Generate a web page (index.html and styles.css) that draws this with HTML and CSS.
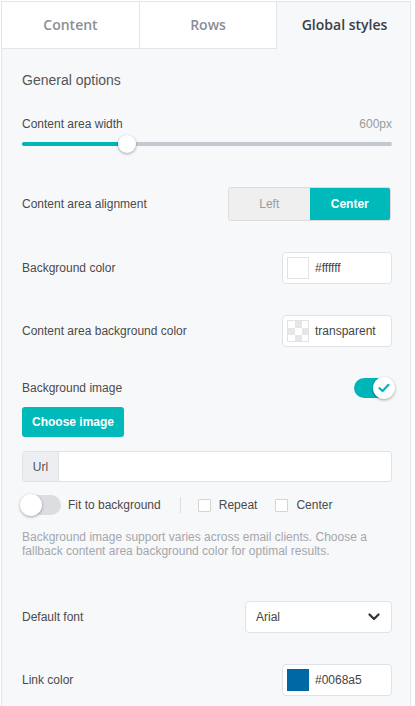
FILE: index.html
```html
<!DOCTYPE html>
<html>
<head>
<meta charset="utf-8">
<link rel="stylesheet" href="styles.css">
</head>
<body>
<div class="panel">
  <div class="tabs">
    <div class="tab tab-content">Content</div>
    <div class="tab tab-rows">Rows</div>
    <div class="tab tab-global active">Global styles</div>
  </div>
  <div class="body">
    <div class="section-title">General options</div>

    <div class="row-label">
      <span>Content area width</span>
      <span class="muted">600px</span>
    </div>
    <div class="slider">
      <div class="track"><div class="fill"></div></div>
      <div class="knob"></div>
    </div>

    <div class="row r-align">
      <span>Content area alignment</span>
      <div class="segmented">
        <div class="seg seg-off">Left</div>
        <div class="seg seg-on">Center</div>
      </div>
    </div>

    <div class="row r-bg">
      <span>Background color</span>
      <div class="color-input">
        <span class="swatch swatch-white"></span>
        <span>#ffffff</span>
      </div>
    </div>

    <div class="row r-cbg">
      <span>Content area background color</span>
      <div class="color-input">
        <span class="swatch swatch-checker"></span>
        <span>transparent</span>
      </div>
    </div>

    <div class="row r-bgimg">
      <span>Background image</span>
      <div class="toggle on">
        <div class="thumb">
          <svg width="12" height="10" viewBox="0 0 12 10"><polyline points="1.5,5.2 4.6,8 10.5,1.8" fill="none" stroke="#00b5b8" stroke-width="2.2" stroke-linecap="round" stroke-linejoin="round"/></svg>
        </div>
      </div>
    </div>

    <div class="btn">Choose image</div>

    <div class="url">
      <div class="url-prefix">Url</div>
      <div class="url-field"></div>
    </div>

    <div class="opts">
      <div class="toggle off"><div class="thumb"></div></div>
      <span class="opt-label">Fit to background</span>
      <span class="divider"></span>
      <span class="checkbox"></span>
      <span class="opt-label">Repeat</span>
      <span class="checkbox cb2"></span>
      <span class="opt-label">Center</span>
    </div>

    <p class="help">Background image support varies across email clients. Choose a fallback content area background color for optimal results.</p>

    <div class="row r-font">
      <span>Default font</span>
      <div class="select">
        <span>Arial</span>
        <svg width="12" height="8" viewBox="0 0 12 8"><polyline points="1.5,1.5 6,6 10.5,1.5" fill="none" stroke="#333" stroke-width="2.2" stroke-linecap="round" stroke-linejoin="round"/></svg>
      </div>
    </div>

    <div class="row r-link">
      <span>Link color</span>
      <div class="color-input">
        <span class="swatch swatch-blue"></span>
        <span>#0068a5</span>
      </div>
    </div>
  </div>
</div>
</body>
</html>
```

FILE: styles.css
```css
* { box-sizing: border-box; }
html, body { margin: 0; padding: 0; background: #ffffff; }
body {
  font-family: "Liberation Sans", Arial, sans-serif;
  font-size: 12px;
  color: #4b4b4b;
  width: 415px;
  height: 706px;
  overflow: hidden;
}
.panel {
  margin: 1px 0 0 1px;
  width: 410px;
  height: 720px;
  border: 1px solid #e2e5e9;
  border-bottom: none;
  background: #f7f8fa;
}
.tabs { display: flex; height: 47px; }
.tab {
  font-family: "Open Sans", sans-serif;
  font-weight: 600;
  font-size: 14px;
  display: flex;
  align-items: center;
  justify-content: center;
  background: #ffffff;
  color: #8a8e97;
  border-bottom: 1px solid #e2e5e9;
  border-right: 1px solid #e2e5e9;
  padding-bottom: 1px;
}
.tab-content { width: 138px; }
.tab-rows { width: 137px; }
.tab-global { flex: 1; border-right: none; padding-left: 2px; }
.tab.active {
  background: #f7f8fa;
  color: #3a3e46;
  border-bottom-color: transparent;
}
.body { padding: 0 18px 0 20px; }
.section-title {
  margin-top: 22px;
  font-size: 14px;
  line-height: 18px;
  color: #555;
}
.row-label {
  margin-top: 27px;
  display: flex;
  justify-content: space-between;
  line-height: 16px;
}
.muted { color: #9a9a9a; }
.slider {
  position: relative;
  margin-top: 2px;
  height: 20px;
  display: flex;
  align-items: center;
}
.track {
  width: 100%;
  height: 4px;
  border-radius: 2px;
  background: #c4c9d1;
  overflow: hidden;
}
.fill { width: 105px; height: 100%; background: #00b5b8; }
.knob {
  position: absolute;
  left: 96px;
  top: 1px;
  width: 18px;
  height: 18px;
  border-radius: 50%;
  background: #fff;
  box-shadow: 0 1px 3px rgba(0,0,0,0.35);
}
.row {
  display: flex;
  align-items: center;
  justify-content: space-between;
  height: 32px;
}
.r-align { margin-top: 33px; height: 34px; }
.r-bg { margin-top: 31px; }
.r-cbg { margin-top: 31px; }
.r-bgimg { margin-top: 31px; height: 20px; }
.r-font { margin-top: 43px; }
.r-link { margin-top: 31px; }
.segmented {
  display: flex;
  width: 163px;
  height: 34px;
  border: 1px solid #dcdcdc;
  border-radius: 3px;
  overflow: hidden;
  margin-right: 1px;
}
.seg {
  flex: 1;
  display: flex;
  align-items: center;
  justify-content: center;
  font-size: 12px;
}
.seg-off { background: #efefef; color: #9a9a9a; }
.seg-on { background: #00b9bb; color: #fff; font-weight: bold; }
.color-input {
  width: 110px;
  height: 32px;
  background: #fff;
  border: 1px solid #dfe2e6;
  border-radius: 4px;
  display: flex;
  align-items: center;
  padding-left: 4px;
  gap: 6px;
  color: #444;
}
.swatch {
  width: 22px;
  height: 22px;
  border: 1px solid #e3e3e3;
  display: inline-block;
}
.swatch-white { background: #fff; }
.swatch-checker {
  background-color: #fff;
  background-image:
    linear-gradient(45deg, #e6e6e6 25%, transparent 25%, transparent 75%, #e6e6e6 75%),
    linear-gradient(45deg, #e6e6e6 25%, transparent 25%, transparent 75%, #e6e6e6 75%);
  background-size: 14px 14px;
  background-position: 0 0, 7px 7px;
}
.swatch-blue { background: #0068a5; border-color: #0068a5; }
.toggle {
  position: relative;
  width: 40px;
  height: 20px;
  border-radius: 10px;
}
.toggle.on { background: #00b5b8; margin-right: -2px; }
.toggle.off { background: #dcdde1; margin-left: -1px; }
.toggle .thumb {
  position: absolute;
  top: -1px;
  width: 22px;
  height: 22px;
  border-radius: 50%;
  background: #fff;
  box-shadow: 0 1px 3px rgba(0,0,0,0.35);
  display: flex;
  align-items: center;
  justify-content: center;
}
.toggle.on .thumb { right: -1px; }
.toggle.off .thumb { left: -1px; }
.btn {
  margin-top: 9px;
  width: 102px;
  height: 30px;
  background: #00b9bb;
  color: #fff;
  font-weight: bold;
  font-size: 12px;
  border-radius: 3px;
  display: flex;
  align-items: center;
  justify-content: center;
}
.url {
  margin-top: 14px;
  height: 31px;
  display: flex;
  border: 1px solid #e0e2e6;
  border-radius: 3px;
  overflow: hidden;
  background: #fff;
}
.url-prefix {
  width: 36px;
  background: #eceef2;
  display: flex;
  align-items: center;
  justify-content: center;
  color: #555;
  border-right: 1px solid #e0e2e6;
}
.url-field { flex: 1; }
.opts {
  margin-top: 13px;
  height: 20px;
  display: flex;
  align-items: center;
}
.opt-label { color: #4b4b4b; }
.opts .toggle { margin-right: 7px; }
.divider {
  width: 1px;
  height: 16px;
  background: #dddddd;
  margin: 0 17px 0 19px;
}
.checkbox {
  width: 13px;
  height: 13px;
  background: #fff;
  border: 1px solid #d4d4d4;
  border-radius: 1px;
  margin-right: 8px;
}
.cb2 { margin-left: 18px; }
.help {
  margin: 15px 0 0 0;
  font-size: 12px;
  line-height: 14px;
  color: #a4a7ab;
}
.select {
  width: 147px;
  height: 32px;
  background: #fff;
  border: 1px solid #dfe2e6;
  border-radius: 4px;
  display: flex;
  align-items: center;
  justify-content: space-between;
  padding: 0 11px 0 10px;
  color: #444;
}
```
